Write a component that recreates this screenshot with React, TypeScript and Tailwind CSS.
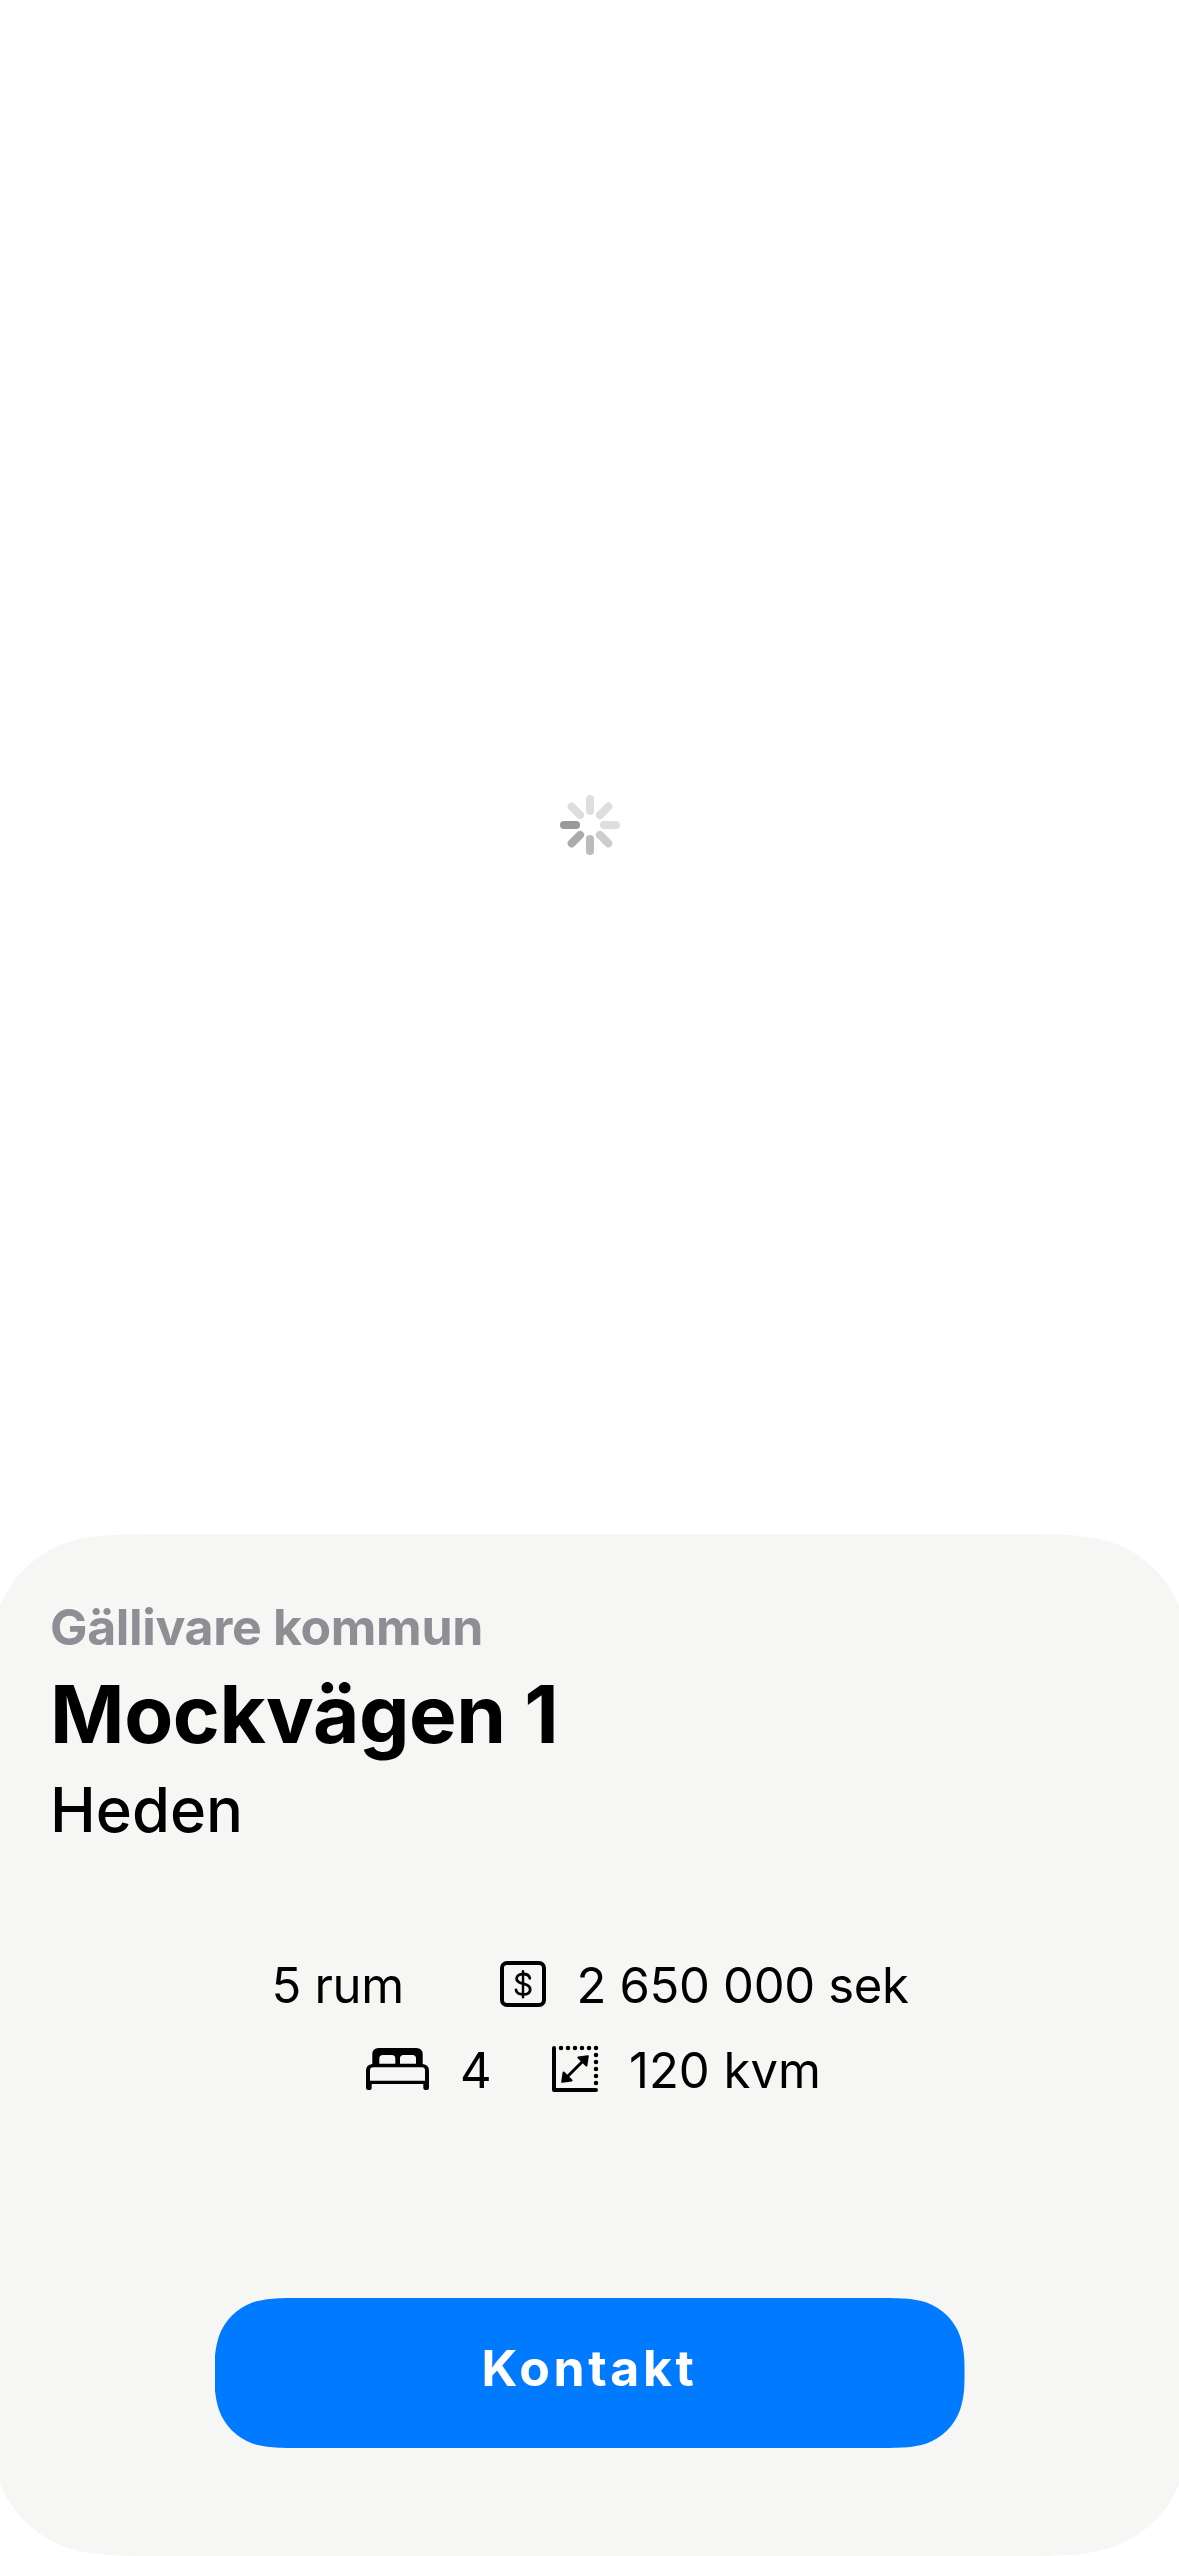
const petals = [
  { angle: 0, color: "#dededf" },
  { angle: 45, color: "#dededf" },
  { angle: 90, color: "#dededf" },
  { angle: 135, color: "#cdcdcf" },
  { angle: 180, color: "#bcbcbe" },
  { angle: 225, color: "#ababad" },
  { angle: 270, color: "#99999b" },
  { angle: 315, color: "#dededf" },
];

function Spinner() {
  return (
    <svg className="h-[60px] w-[60px]" viewBox="-30 -30 60 60">
      {petals.map((p) => (
        <rect key={p.angle} x="-4" y="-30" width="8" height="20" rx="4" fill={p.color} transform={`rotate(${p.angle})`} />
      ))}
    </svg>
  );
}

function DollarIcon() {
  return (
    <svg className="mb-[4px] h-[46px] w-[46px] shrink-0" viewBox="0 0 46 46" fill="none" stroke="#000" strokeLinecap="round">
      <rect x="2" y="2" width="42" height="42" rx="5" strokeWidth="4" />
      <path d="M23 10.2V36.2" strokeWidth="2.4" />
      <path
        d="M29.8 17.3C29.3 14.7 26.7 13 23 13C19.2 13 16.6 15 16.6 17.7C16.6 20.4 18.7 21.6 23 22.7C27.8 23.9 30.2 25.2 30.2 28.4C30.2 31.5 27.4 33.4 23 33.4C18.9 33.4 16.4 31.6 16 28.9"
        strokeWidth="2.8"
      />
    </svg>
  );
}

function BedIcon() {
  return (
    <svg className="mb-[4px] h-[42px] w-[63px] shrink-0" viewBox="0 0 63 42">
      <path
        fillRule="evenodd"
        d="M6.3 16V6.5Q6.3 0 12.8 0H50.2Q56.7 0 56.7 6.5V16Q63 16.6 63 22.5V40Q63 42 61 42H59.3Q57.3 42 57.3 40V36H5.7V40Q5.7 42 3.7 42H2Q0 42 0 40V22.5Q0 16.6 6.3 16ZM13.3 15.7H29.3V10.5Q29.3 7 25.8 7H16.8Q13.3 7 13.3 10.5ZM34 15.7H50V10.5Q50 7 46.5 7H37.5Q34 7 34 10.5ZM4 32.8H59V22.5Q59 19.3 55.8 19.3H7.2Q4 19.3 4 22.5Z"
      />
    </svg>
  );
}

const steps = [9, 16, 23, 30, 37];

function AreaIcon() {
  return (
    <svg className="mb-[4px] h-[46px] w-[46px] shrink-0 overflow-visible" viewBox="0 0 46 46">
      <path d="M2 2V44H44" fill="none" stroke="#000" strokeWidth="4" strokeLinecap="round" strokeLinejoin="round" />
      {steps.map((n) => (
        <circle key={`t${n}`} cx={n} cy="2" r="2.25" />
      ))}
      <circle cx="44" cy="2" r="2.25" />
      {steps.map((n) => (
        <circle key={`r${n}`} cx="44" cy={n} r="2.25" />
      ))}
      <path d="M14 32L32 14" stroke="#000" strokeWidth="3" />
      <path
        d="M35.8 10.2L26.4 11.6L34.4 19.6ZM10.2 35.8L11.6 26.4L19.6 34.4Z"
        stroke="#000"
        strokeWidth="2"
        strokeLinejoin="round"
      />
    </svg>
  );
}

export default function App() {
  return (
    <main className="flex h-[2556px] w-[1179px] flex-col overflow-hidden bg-white font-['Inter',sans-serif] text-black">
      <div className="flex h-[1534px] shrink-0 justify-center pt-[795px]">
        <Spinner />
      </div>

      <section className="-mx-[10.5px] h-[1022px] shrink-0 bg-[#f6f6f4] px-[10.5px] [clip-path:path('M183.4_0H1016.6C1069.4_0_1095.8_0_1124.2_9C1155.3_20.3_1179.7_44.7_1191_75.8C1200_104.2_1200_130.6_1200_183.4V838.6C1200_891.4_1200_917.8_1191_946.2C1179.7_977.3_1155.3_1001.7_1124.2_1013C1095.8_1022_1069.4_1022_1016.6_1022H183.4C130.6_1022_104.2_1022_75.8_1013C44.7_1001.7_20.3_977.3_9_946.2C0_917.8_0_891.4_0_838.6V183.4C0_130.6_0_104.2_9_75.8C20.3_44.7_44.7_20.3_75.8_9C104.2_0_130.6_0_183.4_0Z')]">
        <header className="flex flex-col pt-[63px] pl-[50px] whitespace-nowrap">
          <p className="text-[50px] leading-[60px] font-bold tracking-[-0.35px] text-[#8f8e94]">Gällivare kommun</p>
          <h1 className="mt-[13px] text-[80px] leading-[88px] font-bold tracking-[-0.4px]">Mockvägen 1</h1>
          <p className="mt-[16px] text-[61.5px] leading-[72px] font-medium">Heden</p>
        </header>

        <div className="mt-[110px] flex flex-col gap-[25px] text-[49px] leading-[60px] whitespace-nowrap">
          <div className="flex items-center pl-[271.5px]">
            <span className="mr-[96.5px] tracking-[-0.3px]">5 rum</span>
            <DollarIcon />
            <span className="ml-[30px] tracking-[-0.32px]">2 650 000 sek</span>
          </div>
          <div className="flex items-center pl-[366px]">
            <BedIcon />
            <span className="ml-[31px] w-[92px]">4</span>
            <AreaIcon />
            <span className="ml-[31px]">120 kvm</span>
          </div>
        </div>

        <button className="mt-[197px] ml-[214.5px] flex h-[150px] w-[750px] justify-center bg-[#007aff] pt-[40px] text-[50px] leading-[60px] font-bold tracking-[3.6px] text-white [clip-path:path('M91.7_0H658.3C684.7_0_697.9_0_712.1_4.5C727.6_10.1_739.9_22.4_745.5_37.9C750_52_750_62_750_75C750_88_750_98_745.5_112.1C739.9_127.6_727.6_139.9_712.1_145.5C697.9_150_684.7_150_658.3_150H91.7C65.3_150_52.1_150_37.9_145.5C22.4_139.9_10.1_127.6_4.5_112.1C0_98_0_88_0_75C0_62_0_52_4.5_37.9C10.1_22.4_22.4_10.1_37.9_4.5C52.1_0_65.3_0_91.7_0Z')]">
          Kontakt
        </button>
      </section>
    </main>
  );
}
